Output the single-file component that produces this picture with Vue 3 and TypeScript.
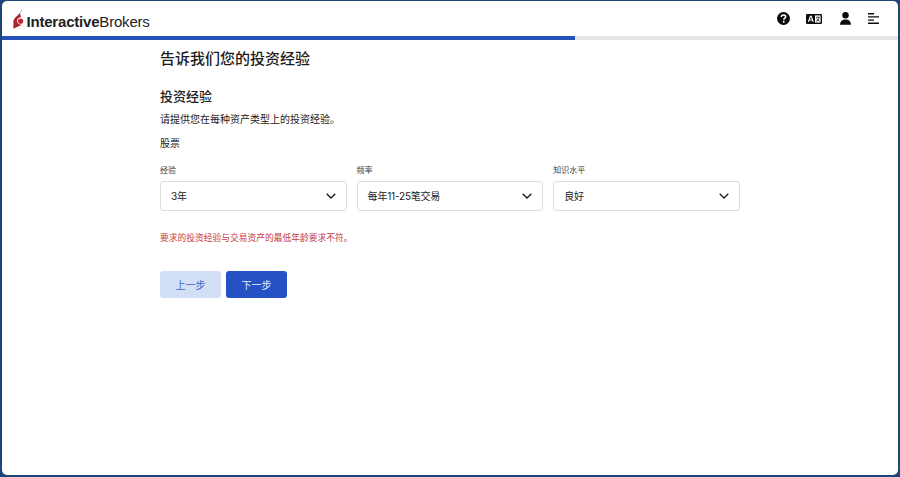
<script setup lang="ts">
const fields = [
  { label: "经验", value: "3年" },
  { label: "频率", value: "每年11-25笔交易" },
  { label: "知识水平", value: "良好" }
]
</script>

<template>
  <div class="frame">
    <div class="window">
      <header class="topbar">
        <div class="logo">
          <svg class="logo-mark" width="11" height="20" viewBox="0 0 11 20">
            <path d="M8.8 0 C9 2.4 7 4 5 6 C2.6 8.2 0.8 9.8 0.4 12 L0.4 19.8 L9 15.8 C6.4 16 4 14.4 4 12 C4 9.8 5.6 8.4 8 8 C6.6 5.4 7.4 2.4 8.8 0 Z" fill="#a8232c" />
            <circle cx="7.6" cy="12.2" r="2.6" fill="#c8242f" />
          </svg>
          <span class="logo-text"><b>Interactive</b>Brokers</span>
        </div>
        <div class="tools">
          <svg width="13" height="13" viewBox="0 0 14 14">
            <circle cx="7" cy="7" r="7" fill="#0c0c0c" />
            <path d="M4.7 5.5 C4.7 4 5.7 3.2 7 3.2 C8.3 3.2 9.3 4 9.3 5.2 C9.3 6.7 7.2 6.8 7.2 8.3" fill="none" stroke="#fff" stroke-width="1.7" />
            <circle cx="7.2" cy="10.5" r="1.05" fill="#fff" />
          </svg>
          <svg width="16" height="10" viewBox="0 0 16 10">
            <rect width="16" height="10" rx="1.2" fill="#0c0c0c" />
            <path d="M2.4 7.8 L4.4 2.2 L5.2 2.2 L7.2 7.8 M3.3 6 L6.3 6" fill="none" stroke="#fff" stroke-width="1.1" />
            <rect x="9" y="1.4" width="5.6" height="7.2" fill="#fff" />
            <path d="M10 3.2 L13.6 3.2 M13 3.2 C12.8 5.2 11.6 6.6 10 7.4 M10.8 4.6 C11.4 5.8 12.4 6.8 13.6 7.4" fill="none" stroke="#0c0c0c" stroke-width="0.8" />
          </svg>
          <svg width="13" height="13" viewBox="0 0 13 14">
            <circle cx="6.5" cy="3.6" r="3.5" fill="#0c0c0c" />
            <path d="M0.6 13.8 C0.6 10 3 8 6.5 8 C10 8 12.4 10 12.4 13.8 Z" fill="#0c0c0c" />
          </svg>
          <svg width="11" height="11" viewBox="0 0 11 11">
            <path d="M0 0.7 H6 M0 3.9 H11 M0 7.1 H6 M0 10.3 H11" stroke="#0c0c0c" stroke-width="1.4" fill="none" />
          </svg>
        </div>
      </header>

      <div class="progress"><div class="progress-fill" /></div>

      <main class="content">
        <h1 class="title">告诉我们您的投资经验</h1>
        <h2 class="section">投资经验</h2>
        <p class="intro">请提供您在每种资产类型上的投资经验。</p>
        <p class="asset">股票</p>

        <div class="fields">
          <div v-for="field in fields" :key="field.label" class="field">
            <label class="field-label">{{ field.label }}</label>
            <div class="select">
              <span class="select-value">{{ field.value }}</span>
              <svg width="10" height="6" viewBox="0 0 10 6">
                <path d="M0.7 0.7 L5 5 L9.3 0.7" fill="none" stroke="#1a1a1a" stroke-width="1.3" />
              </svg>
            </div>
          </div>
        </div>

        <p class="error">要求的投资经验与交易资产的最低年龄要求不符。</p>

        <div class="actions">
          <button class="btn btn--back">上一步</button>
          <button class="btn btn--next">下一步</button>
        </div>
      </main>
    </div>
  </div>
</template>

<style scoped>
.frame {
  height: 477px;
  box-sizing: border-box;
  padding: 1px 2px 2px;
  background: #1c4679;
  overflow: hidden;
}

.window {
  height: 100%;
  background: #fff;
  border-radius: 5px;
  overflow: hidden;
  font-family: Inter, "Noto Sans CJK SC", sans-serif;
  color: #1c1c1c;
}

.topbar {
  height: 35px;
  display: flex;
  align-items: center;
  justify-content: space-between;
  padding: 0 19px 0 10.5px;
}

.logo {
  display: flex;
  align-items: flex-start;
  align-self: flex-start;
  gap: 3px;
  margin-top: 8px;
}

.logo-text {
  margin-top: 4px;
  font-family: "Liberation Sans", sans-serif;
  font-size: 15px;
  letter-spacing: -0.2px;
  color: #222;
}

.tools {
  display: flex;
  align-items: center;
  gap: 16.5px;
}

.progress {
  height: 4px;
  background: #e5e5e5;
}

.progress-fill {
  width: 573px;
  height: 100%;
  background: #2452b8;
}

.content {
  width: 580px;
  margin-left: 158px;
}

.title {
  margin: 9px 0 0;
  font-size: 15px;
  line-height: 20px;
  font-weight: 500;
}

.section {
  margin: 18px 0 0;
  font-size: 13px;
  line-height: 18px;
  font-weight: 500;
}

.intro {
  margin: 6px 0 0;
  font-size: 10px;
  line-height: 16px;
}

.asset {
  margin: 8px 0 0;
  font-size: 10px;
  line-height: 16px;
}

.fields {
  display: grid;
  grid-template-columns: repeat(3, 186.6px);
  column-gap: 10px;
  margin-top: 14px;
}

.field-label {
  display: block;
  font-size: 8px;
  line-height: 11px;
  color: #3c3c3c;
}

.select {
  margin-top: 5px;
  height: 30px;
  box-sizing: border-box;
  display: flex;
  align-items: center;
  justify-content: space-between;
  padding: 0 10px;
  border: 1px solid #dcdcdc;
  border-radius: 3px;
  font-size: 10px;
  letter-spacing: -0.2px;
}

.select-value {
  margin-bottom: 2px;
}

.error {
  margin: 21px 0 0;
  font-size: 8.75px;
  line-height: 12px;
  color: #c8383f;
}

.actions {
  display: flex;
  gap: 5px;
  margin-top: 27px;
}

.btn {
  width: 61px;
  height: 27px;
  padding: 0;
  border: none;
  border-radius: 3px;
  font-family: inherit;
  font-size: 10px;
}

.btn--back {
  background: #d3dff7;
  color: #3f66bf;
}

.btn--next {
  background: #2452c4;
  color: #e8eefb;
}
</style>

<style>
body {
  margin: 0;
}
</style>
